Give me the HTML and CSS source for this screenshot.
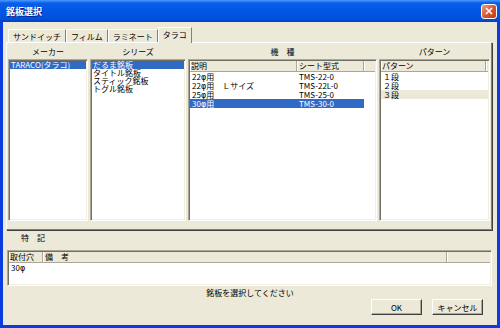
FILE: index.html
```html
<!DOCTYPE html>
<html lang="ja">
<head>
  <meta charset="UTF-8" />
  <title>銘板選択</title>
  <link rel="stylesheet" href="styles.css">
</head>
<body>
  <div class="window">
    <div class="titlebar">
      <span class="title">銘板選択</span>
      <span class="close">
        <svg width="8" height="8" viewBox="0 0 8 8"><path d="M1 1 L7 7 M7 1 L1 7" stroke="#fff" stroke-width="1.6" /></svg>
      </span>
    </div>
    <div class="client">
      <div class="tabs">
        <div class="tab">サンドイッチ</div>
        <div class="tab">フィルム</div>
        <div class="tab">ラミネート</div>
        <div class="tab active">タラコ</div>
      </div>

      <div class="panel">
        <div class="heading">メーカー</div>
        <div class="heading">シリーズ</div>
        <div class="heading">機　種</div>
        <div class="heading">パターン</div>

        <div class="box list">
          <div class="item selected">TARACO(タラコ)</div>
        </div>
        <div class="box list">
          <div class="item selected">だるま銘板</div>
          <div class="item">タイトル銘板</div>
          <div class="item">スティック銘板</div>
          <div class="item">トグル銘板</div>
        </div>
        <div class="box listview">
          <div class="lv-head">
            <div class="lv-col c-desc">説明</div>
            <div class="lv-col c-sheet">シート型式</div>
            <div class="lv-col c-fill"></div>
          </div>
          <div class="lv-row"><span class="c-desc">22<i class="phi">φ</i>用</span><span class="c-sheet">TMS-22-0</span></div>
          <div class="lv-row"><span class="c-desc">22<i class="phi">φ</i>用　Ｌサイズ</span><span class="c-sheet">TMS-22L-0</span></div>
          <div class="lv-row"><span class="c-desc">25<i class="phi">φ</i>用</span><span class="c-sheet">TMS-25-0</span></div>
          <div class="lv-row selected"><span class="c-desc">30<i class="phi">φ</i>用</span><span class="c-sheet">TMS-30-0</span></div>
        </div>
        <div class="box listview">
          <div class="lv-head">
            <div class="lv-col c-pattern">パターン</div>
            <div class="lv-col c-fill"></div>
          </div>
          <div class="lv-row"><span class="c-pattern">１段</span></div>
          <div class="lv-row"><span class="c-pattern">２段</span></div>
          <div class="lv-row inactive"><span class="c-pattern">３段</span></div>
        </div>
      </div>

      <div class="notes">
        <div class="notes-heading">特　記</div>
        <div class="box listview notes-list">
          <div class="lv-head">
            <div class="lv-col c-hole">取付穴</div>
            <div class="lv-col c-remark">備　考</div>
            <div class="lv-col c-fill"></div>
          </div>
          <div class="lv-row"><span class="c-hole">30<i class="phi">φ</i></span></div>
        </div>
      </div>

      <div class="footer">
        <div class="status">銘板を選択してください</div>
        <div class="buttons">
          <button class="btn">OK</button>
          <button class="btn">キャンセル</button>
        </div>
      </div>
    </div>
  </div>
</body>
</html>
```

FILE: styles.css
```css
body {
  margin: 0;
  font-family: "Noto Sans CJK JP", "DejaVu Sans", sans-serif;
  font-size: 8px;
  color: #000;
}

.window {
  width: 500px;
  height: 328px;
  display: flex;
  flex-direction: column;
  background: #0a3ce0;
}

.titlebar {
  height: 22px;
  flex: none;
  display: flex;
  align-items: center;
  justify-content: space-between;
  padding: 0 3px 0 6px;
  background: linear-gradient(to bottom, #4a9bff 0, #0a5ee8 3px, #0057e6 10px, #0052de 18px, #0043c4 22px);
  color: #fff;
}

.title {
  font-size: 9px;
  font-weight: bold;
  text-shadow: 1px 1px #0a1e80;
}

.close {
  width: 14px;
  height: 13px;
  border: 1px solid #fff;
  border-radius: 3px;
  background: linear-gradient(135deg, #f09a80, #d9532f 55%, #c23b1b);
  display: flex;
  align-items: center;
  justify-content: center;
}

.client {
  flex: 1;
  margin: 0 3px 3px;
  background: #ece9d8;
  display: flex;
  flex-direction: column;
}

/* tabs */
.tabs {
  display: flex;
  height: 13px;
  margin-top: 7px;
  padding-left: 5px;
}

.tab {
  height: 13px;
  line-height: 13px;
  padding: 0 4px;
  box-sizing: border-box;
  border-top: 1px solid #fff;
  border-left: 1px solid #fff;
  border-right: 1px solid #808080;
  background: #ece9d8;
}

.tab.active {
  height: 16px;
  margin-top: -2px;
  position: relative;
  z-index: 1;
  line-height: 14px;
}

/* tab page */
.panel {
  height: 188px;
  margin: 0 5px 0 3px;
  box-sizing: border-box;
  border-top: 1px solid #fff;
  border-left: 1px solid #fff;
  border-right: 1px solid #808080;
  border-bottom: 1px solid #808080;
  box-shadow: 1px 1px 0 #404040;
  padding: 0 1px 8px 1px;
  display: grid;
  grid-template-columns: 80px 96px 189px 1fr;
  grid-template-rows: 16px 1fr;
  column-gap: 2px;
}

.heading {
  text-align: center;
  line-height: 14px;
  padding-top: 2px;
}

.box {
  background: #fff;
  border: 1px solid;
  border-color: #aca899 #fff #fff #aca899;
  box-shadow: inset 1px 1px #716f64, inset -1px -1px #f1efe2;
  padding: 1px;
  overflow: hidden;
}

.item {
  line-height: 8px;
  height: 8px;
  padding-left: 1px;
  white-space: nowrap;
}

.item.selected,
.lv-row.selected span {
  background: #316ac5;
  color: #fff;
}

.phi {
  font-family: "DejaVu Sans", sans-serif;
  font-style: normal;
  font-size: 8px;
}

/* list views */
.lv-head {
  display: flex;
  height: 10px;
  background: #ece9d8;
  border-bottom: 1px solid #aca899;
}

.lv-col {
  box-sizing: border-box;
  line-height: 9px;
  padding-left: 2px;
  border-right: 1px solid #aca899;
  box-shadow: inset 1px 0 #fff;
  white-space: nowrap;
}

.lv-col.c-fill {
  flex: 1;
  border-right: none;
}

.lv-row {
  display: flex;
  height: 9px;
  line-height: 9px;
  white-space: nowrap;
}

.lv-row span {
  box-sizing: border-box;
  padding-left: 2px;
}

.lv-row.inactive span {
  background: #ece9d8;
}

.c-desc { width: 107px; }
.c-sheet { width: 67px; }
.c-pattern { width: 108px; }
.c-hole { width: 34px; }
.c-remark { width: 404px; }

.lv-head .lv-col:first-child {
  padding-left: 1px;
}

/* notes */
.notes {
  margin: 0 5px 0 4px;
}

.notes-heading {
  height: 20px;
  line-height: 16px;
  padding-left: 14px;
}

.notes-list {
  height: 36px;
  box-sizing: border-box;
}

/* footer */
.footer {
  flex: 1;
  display: flex;
  flex-direction: column;
  padding: 2px 14px 10px 0;
}

.status {
  height: 11px;
  line-height: 10px;
  text-align: center;
  padding-left: 14px;
}

.buttons {
  display: flex;
  justify-content: flex-end;
  gap: 10px;
}

.btn {
  width: 51px;
  height: 16px;
  padding: 0;
  font-family: inherit;
  font-size: 8px;
  background: #ece9d8;
  border: 1px solid;
  border-color: #fff #404040 #404040 #fff;
  box-shadow: inset -1px -1px #aca899;
  color: #000;
}
```
